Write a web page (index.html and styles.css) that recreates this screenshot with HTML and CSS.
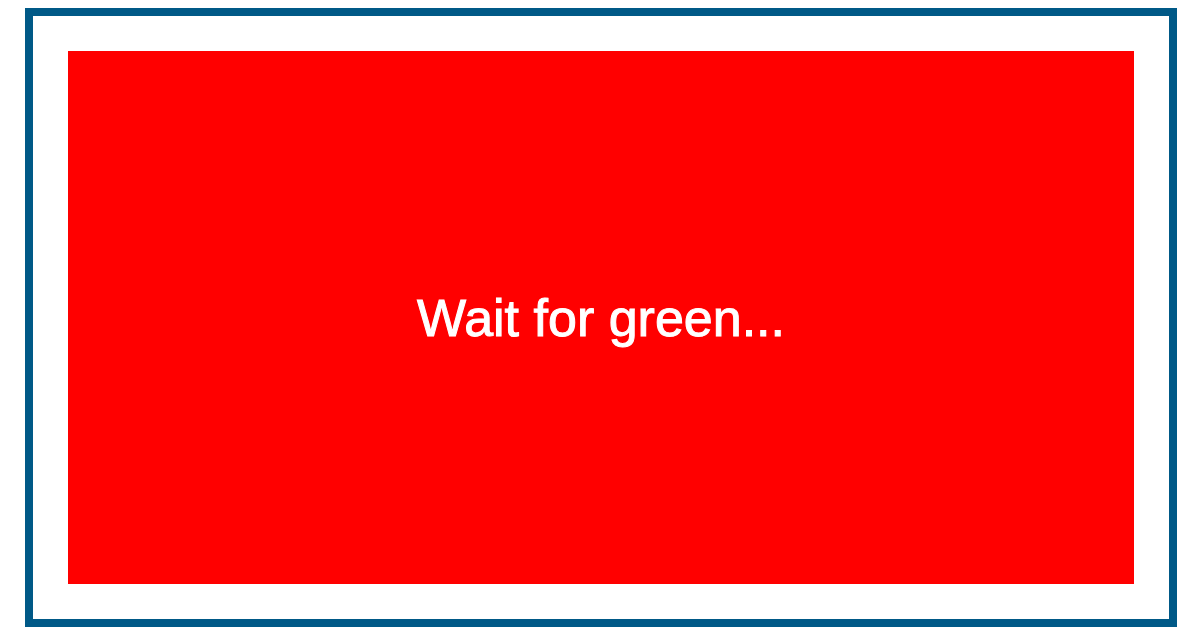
FILE: index.html
```html
<!DOCTYPE html>
<html lang="en">
<head>
<meta charset="utf-8">
<meta name="viewport" content="width=device-width, initial-scale=1">
<title>Reaction test</title>
<link rel="stylesheet" href="styles.css">
</head>
<body>
<main class="frame">
<button type="button" class="signal">Wait for green...</button>
</main>
</body>
</html>
```

FILE: styles.css
```css
* {
  box-sizing: border-box;
}

body {
  display: flex;
  min-height: 100vh;
  margin: 0;
  padding: 8px 19px 8px 25px;
  background: #fff;
  font-family: "Liberation Sans", Arial, sans-serif;
}

.frame {
  display: flex;
  flex: 1;
  padding: 35px;
  border: 8px solid #005987;
}

.signal {
  flex: 1;
  border: 0;
  padding: 0;
  background: #f00;
  color: #fff;
  font: inherit;
  font-size: 52px;
  line-height: 60px;
  -webkit-text-stroke: 1px #fff;
}
```
